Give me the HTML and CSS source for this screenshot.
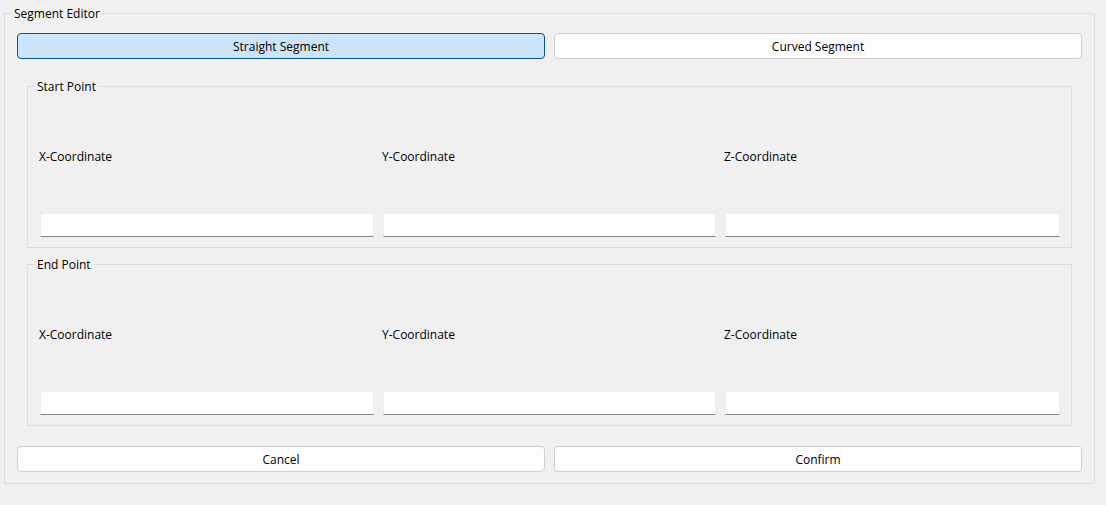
FILE: index.html
```html
<!DOCTYPE html>
<html>
<head>
<meta charset="utf-8">
<title>Segment Editor</title>
<link rel="stylesheet" href="styles.css">
</head>
<body>
<div class="group outer">
  <span class="group-title">Segment Editor</span>
  <div class="btn-row">
    <button class="btn btn-active">Straight Segment</button>
    <button class="btn">Curved Segment</button>
  </div>

  <div class="group point start">
    <span class="group-title">Start Point</span>
    <div class="coords">
      <label class="coord-label">X-Coordinate</label>
      <label class="coord-label">Y-Coordinate</label>
      <label class="coord-label">Z-Coordinate</label>
      <input class="coord-input" type="text">
      <input class="coord-input" type="text">
      <input class="coord-input" type="text">
    </div>
  </div>

  <div class="group point end">
    <span class="group-title">End Point</span>
    <div class="coords">
      <label class="coord-label">X-Coordinate</label>
      <label class="coord-label">Y-Coordinate</label>
      <label class="coord-label">Z-Coordinate</label>
      <input class="coord-input" type="text">
      <input class="coord-input" type="text">
      <input class="coord-input" type="text">
    </div>
  </div>

  <div class="btn-row footer">
    <button class="btn">Cancel</button>
    <button class="btn">Confirm</button>
  </div>
</div>
</body>
</html>
```

FILE: styles.css
```css
* {
  box-sizing: border-box;
}

html, body {
  margin: 0;
  padding: 0;
  background: #f0f0f0;
}

body {
  font-family: "Open Sans", "Liberation Sans", sans-serif;
  font-size: 12px;
  line-height: 16px;
  color: #000;
  width: 1106px;
  height: 505px;
  overflow: hidden;
}

.group {
  position: relative;
  border: 1px solid #dcdcdc;
}

.group-title {
  position: absolute;
  top: -8px;
  left: 7px;
  padding: 0 2px 0 2px;
  background: #f0f0f0;
  line-height: 16px;
  white-space: nowrap;
}

.outer {
  margin: 13px 0 0 4px;
  width: 1091px;
  padding: 19px 12px 11px 12px;
}

.btn-row {
  display: grid;
  grid-template-columns: 1fr 1fr;
  column-gap: 9px;
}

.btn {
  height: 26px;
  margin: 0;
  padding: 1px 0 0 0;
  font: inherit;
  color: #000;
  background: #fdfdfd;
  border: 1px solid #d0d0d0;
  border-radius: 4px;
}

.btn-active {
  background: #cce4f7;
  border-color: #005499;
}

.point {
  margin: 27px 10px 0 10px;
  padding: 62px 11px 10px 12px;
}

.point.end {
  margin-top: 16px;
}

.coords {
  display: grid;
  grid-template-columns: 334px 333px 335px;
  column-gap: 9px;
  row-gap: 48px;
}

.coord-label {
  display: block;
  height: 16px;
  line-height: 16px;
  margin-left: -1px;
  white-space: nowrap;
}

.coord-input {
  display: block;
  width: 100%;
  height: 24px;
  margin: 0;
  padding: 0 6px;
  font: inherit;
  background: #fff;
  border: 1px solid #ececec;
  border-bottom-color: #868686;
  border-radius: 0;
  outline: none;
}

.footer {
  margin-top: 20px;
}
```
